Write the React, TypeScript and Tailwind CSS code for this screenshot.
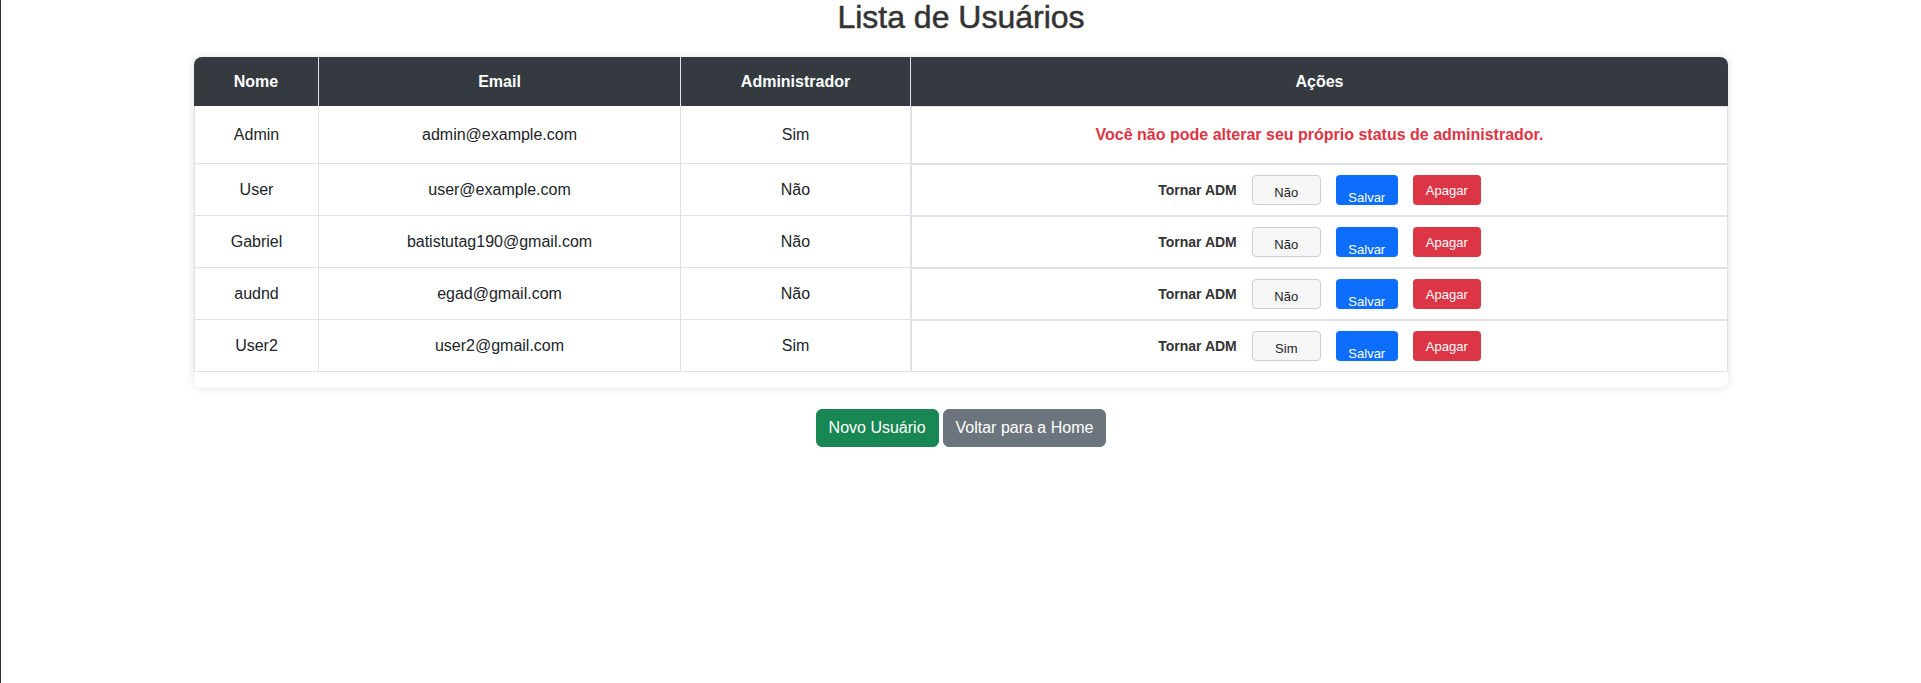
import React from "react";

type Row = { nome: string; email: string; admin: string; self?: boolean; sel?: string };

const rows: Row[] = [
  { nome: "Admin", email: "admin@example.com", admin: "Sim", self: true },
  { nome: "User", email: "user@example.com", admin: "Não", sel: "Não" },
  { nome: "Gabriel", email: "batistutag190@gmail.com", admin: "Não", sel: "Não" },
  { nome: "audnd", email: "egad@gmail.com", admin: "Não", sel: "Não" },
  { nome: "User2", email: "user2@gmail.com", admin: "Sim", sel: "Sim" },
];

export default function App() {
  return (
    <div className="min-h-screen border-l border-[#2b2f3d] bg-white font-['Liberation_Sans',Arial,sans-serif] text-[#212529]">
      <h1 className="mb-[23px] text-center text-[32px] leading-[34px] font-normal text-[#333333] [-webkit-text-stroke:0.5px_#333333]">
        Lista de Usuários
      </h1>

      <div className="mx-auto w-[1534px] overflow-hidden rounded-lg bg-white pb-4 shadow-[0_0_8px_rgba(0,0,0,0.12)]">
        <div className="grid grid-cols-[125px_362px_230px_817px]">
          <div className="flex h-[49px] items-center justify-center border-r border-[#dee2e6] bg-[#343a40] text-[16px] font-bold text-white">
            Nome
          </div>
          <div className="flex h-[49px] items-center justify-center border-r border-[#dee2e6] bg-[#343a40] text-[16px] font-bold text-white">
            Email
          </div>
          <div className="flex h-[49px] items-center justify-center border-r border-[#dee2e6] bg-[#343a40] text-[16px] font-bold text-white">
            Administrador
          </div>
          <div className="flex h-[49px] items-center justify-center bg-[#343a40] text-[16px] font-bold text-white">
            Ações
          </div>

          {rows.map((r, i) => {
            const h = i === 0 ? "h-[58px]" : "h-[52px]";
            return (
              <React.Fragment key={r.email}>
                <div className={`${h} flex items-center justify-center border-x border-b border-[#dee2e6] text-[16px]`}>
                  {r.nome}
                </div>
                <div className={`${h} flex items-center justify-center border-r border-b border-[#dee2e6] text-[16px]`}>
                  {r.email}
                </div>
                <div className={`${h} flex items-center justify-center border-r border-b border-[#dee2e6] text-[16px]`}>
                  {r.admin}
                </div>
                <div className={`${h} flex items-center justify-center gap-[15px] border border-[#dee2e6]`}>
                  {r.self ? (
                    <span className="text-[16px] font-bold text-[#dc3545]">
                      Você não pode alterar seu próprio status de administrador.
                    </span>
                  ) : (
                    <>
                      <span className="text-[14px] leading-4 font-bold text-[#333333]">Tornar ADM</span>
                      <div className="h-[30px] w-[69px] rounded-[4px] border border-[#cfcfcf] bg-[#f6f6f6] pt-[9px] text-center text-[13px] leading-[15px] text-[#212529]">
                        {r.sel}
                      </div>
                      <div className="h-[30px] w-[62px] overflow-hidden rounded-[4px] bg-[#0d6efd] pt-[15px] text-center text-[13px] leading-[15px] text-white">
                        Salvar
                      </div>
                      <div className="h-[30px] w-[68px] rounded-[4px] bg-[#dc3545] pt-[8px] text-center text-[13px] leading-[15px] text-white">
                        Apagar
                      </div>
                    </>
                  )}
                </div>
              </React.Fragment>
            );
          })}
        </div>
      </div>

      <div className="mt-[21px] flex justify-center gap-[4px]">
        <div className="flex h-[38px] items-center rounded-md border border-[#198754] bg-[#198754] px-3 text-[16px] text-white">
          Novo Usuário
        </div>
        <div className="flex h-[38px] items-center rounded-md border border-[#6c757d] bg-[#6c757d] px-3 text-[16px] text-white">
          Voltar para a Home
        </div>
      </div>
    </div>
  );
}
